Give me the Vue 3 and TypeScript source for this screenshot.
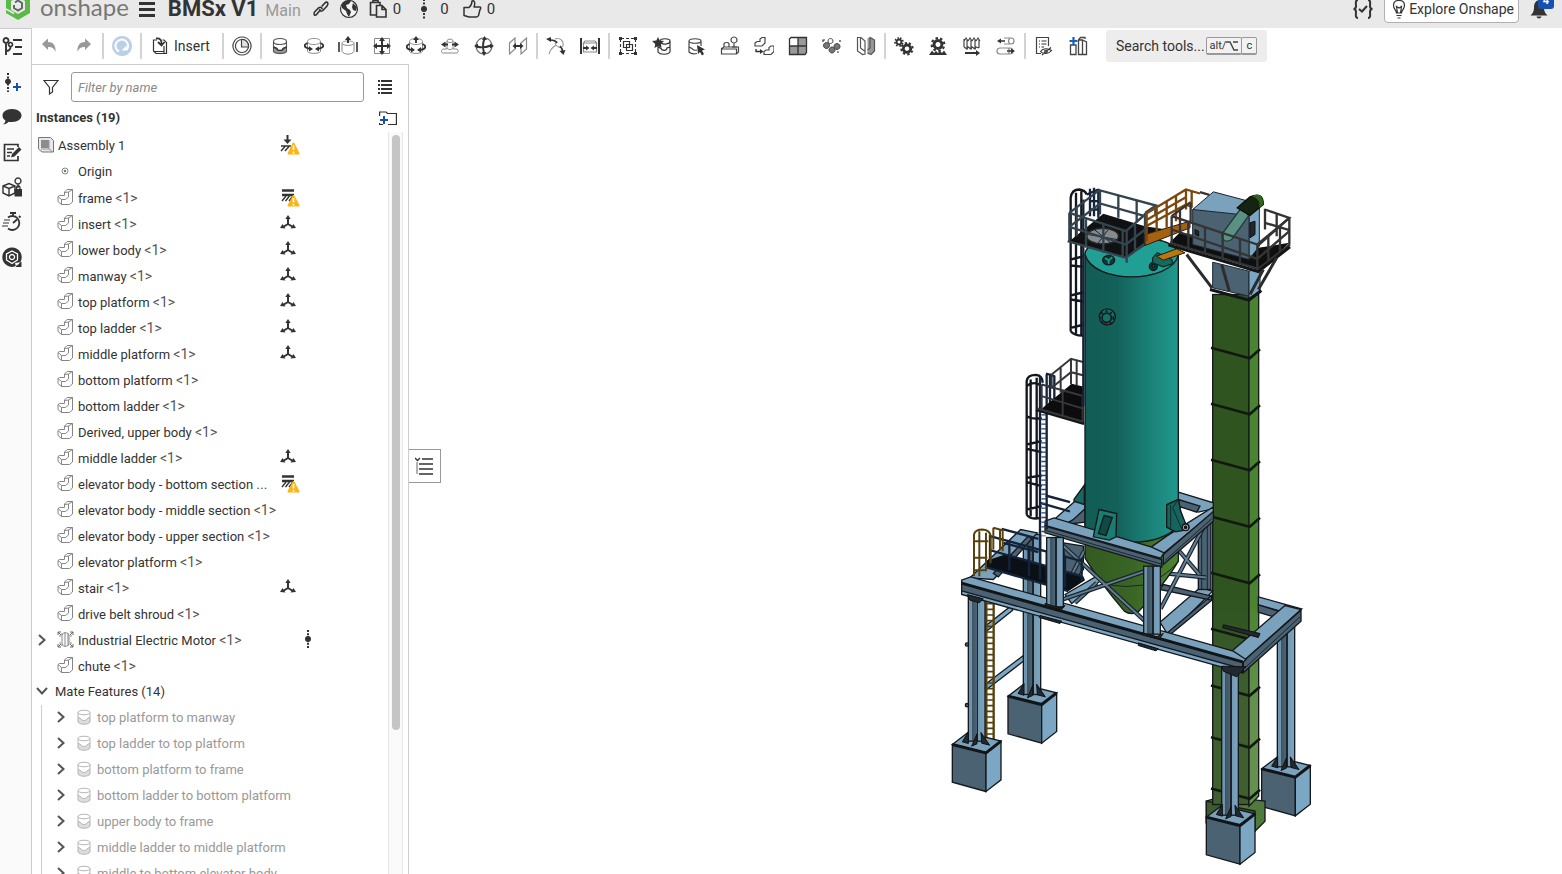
<script setup lang="ts">
interface Part { d: string; f?: string; s?: string; w?: number; t?: string }
interface Tool { name: string; parts: Part[]; sep?: boolean; label?: string }
interface Instance { name: string; n?: string; status?: 'mate' | 'fixed' | 'dots'; kind?: 'motor' }

const K = '#333'
const G = '#8a8a8a'
const cyl = 'M3.5 5.5C3.5 3.7 6 2.5 10 2.5S16.500 3.700 16.500 5.500 14 8.500 10 8.500 3.500 7.300 3.500 5.500ZM3.500 5.500V15.500C5 18 15 18 16.500 15.500V5.500'

const tools: Tool[] = [
  { name: 'Undo', parts: [{ d: 'M2 8L8 2.500V6C13 6 16 9 15.500 16C14 12 12 11 8 11V14Z', f: '#999' }] },
  { name: 'Redo', sep: true, parts: [{ d: 'M17 8L11 2.500V6C6 6 3 9 3.500 16C5 12 7 11 11 11V14Z', f: '#999' }] },
  { name: 'Update', sep: true, parts: [{ d: 'M10 0a10 10 0 1 0 .01 0Z', f: '#bccfe8' }, { d: 'M7 15.500A6.300 6.300 0 1 1 14.500 14', s: '#fff', w: 2 }, { d: 'M14.500 9.500V14.500H9.500Z', f: '#fff' }] },
  { name: 'Insert', label: 'Insert', sep: true, parts: [{ d: 'M7 4H3.500V15L6 17.500H16.500V6.500L14 4H12.500M3.500 15L4.500 15.500H14V17M14 16V10', s: K, w: 1.200 }, { d: 'M6 2.500C10 2 12 4 11.500 8.500M8 6L11.500 9.500 14.500 6', s: K, w: 1.800 }] },
  { name: 'History', sep: true, parts: [{ d: 'M10 1a9 9 0 1 0 .01 0ZM10 3.500a6.500 6.500 0 1 0 .01 0Z', s: '#444', w: 1.200 }, { d: 'M9.500 3.500V11H16.500A6.500 6.500 0 0 0 9.500 3.500Z', f: '#e2e2e2', s: '#444', w: 1.200 }] },
  { name: 'Fastened mate', parts: [{ d: 'M3.500 11L7 12.500C7 15 13 15 13 12.500L16.500 11V16C15 19 5 19 3.500 16Z', f: '#999' }, { d: cyl, s: '#555', w: 1.100 }, { d: 'M3.500 11L7 12.500C7 15 13 15 13 12.500L16.500 11', s: K, w: 1.400 }] },
  { name: 'Revolute mate', parts: [{ d: cyl, s: G, w: 1 }, { d: 'M3.500 7C-1 9 0 12 6 12.700M16.500 7C21 9 20 12 14 12.700', s: K, w: 1.900 }, { d: 'M9 13L5 10.200V15.500ZM11 13L15 10.200V15.500Z', f: K }] },
  { name: 'Slider mate', parts: [{ d: 'M4 7.500C4 6 6 5 10 5S16 6 16 7.500V15.500C14 19 6 19 4 15.500ZM4 7.500C5 10 15 10 16 7.500', s: G, w: 1 }, { d: 'M1 6V16M19 6V16', s: K, w: 1.600 }, { d: 'M10 7V3', s: K, w: 2 }, { d: 'M10 0L13 4H7Z', f: K }] },
  { name: 'Planar mate', parts: [{ d: 'M2.500 2.500H17.500V17.500H2.500Z', s: '#888', w: 1 }, { d: 'M10 4V16M4 10H16', s: K, w: 2 }, { d: 'M10 1L13 5H7ZM10 19L13 15H7ZM1 10L5 7V13ZM19 10L15 7V13Z', f: K }] },
  { name: 'Cylindrical mate', parts: [{ d: cyl, s: G, w: 1 }, { d: 'M3.500 8C-1 10 0 13 6 14M16.500 8C21 10 20 13 14 14M10 7V3', s: K, w: 1.900 }, { d: 'M9 14L5 11V16.500ZM11 14L15 11V16.500ZM10 0L13 4H7Z', f: K }] },
  { name: 'Pin slot mate', parts: [{ d: 'M7 5C7 2.500 13 2.500 13 5V13H17C19 14 18 17 17 17H3C1 17 1 14 3 13H7ZM7 5C8 7 12 7 13 5M7 12C8 14 12 14 13 12', s: G, w: 1 }, { d: 'M4 8.500H8M12 8.500H16', s: K, w: 1.800 }, { d: 'M1 8.500L5.500 5.500V11.500ZM19 8.500L14.500 5.500V11.500Z', f: K }] },
  { name: 'Ball mate', parts: [{ d: 'M10 2a8 8 0 1 0 .01 0Z', s: '#666', w: 1.200 }, { d: 'M3 10.500C7 12 13 11 17 9.500M10.500 3C8 8 9 13 10 17', s: K, w: 1.900 }, { d: 'M10.500 0L13 4H8ZM10 20L12.500 16H7.500ZM0 10L4 7.500V12.500ZM20 10L16 7.500V12.500Z', f: K }] },
  { name: 'Parallel mate', sep: true, parts: [{ d: 'M1.500 7L7 2V13L1.500 18ZM13 7L18.500 2V13L13 18Z', s: G, w: 1.200 }, { d: 'M6 10H14', s: K, w: 2 }, { d: 'M4.500 10L8 7V13ZM15.500 10L12 7V13Z', f: K }] },
  { name: 'Tangent mate', parts: [{ d: 'M9 3C14 1 18 5 17 10C15 13 11 11 9 8M9 8L11 5M10 9C7 11 4 14 3 18', s: '#999', w: 1.100 }, { d: 'M4 4C8 4 10 5 11 7M14 10C16 12 16.500 14 16.500 16', s: K, w: 1.700 }, { d: 'M0 3L5 1 5 6ZM17.500 19L13.500 15 19.500 14Z', f: K }] },
  { name: 'Width mate', sep: true, parts: [{ d: 'M5 5H15L16.500 7V16H3.500V7ZM3.500 7H16.500', s: G, w: 1.200 }, { d: 'M1 2V18M19 2V18', s: K, w: 2 }, { d: 'M3 12H8M12 12H17', s: K, w: 1.800 }, { d: 'M9.500 12L6 9.500V14.500ZM10.500 12L14 9.500V14.500Z', f: K }] },
  { name: 'Group', parts: [{ d: 'M3 2.500H17M3 17.500H17M2.500 3V17M17.500 3V17', s: K, w: 1.100, t: '3 2' }, { d: 'M1 1H4V4H1ZM16 1H19V4H16ZM1 16H4V19H1ZM16 16H19V19H16Z', f: K }, { d: 'M5.500 5.500H11.500V11.500H5.500ZM8.500 8.500H14.500V14.500H8.500Z', s: K, w: 1.200 }] },
  { name: 'Mate connector', parts: [{ d: 'M8 5C8 2 18 2 18 5V16C16 19 8 19 6 16V10M9 7C12 9 18 8 18 5M6 11L9 12.500C10 15 15 15 15 12L18 11', s: K, w: 1.200 }, { d: 'M6 1L7.700 4.500 12 5 9 8 9.500 12 6 10 2.500 12 3.200 8 0 5 4.300 4.500Z', f: K }] },
  { name: 'Select mate', parts: [{ d: 'M3 5C3 2 15 2 15 5V10M3 5C3 8 15 8 15 5M3 5V16C5 18 9 18 11 17.500M3 11L6 12.500C7 14.500 9 14.500 11 14', s: '#444', w: 1.200 }, { d: 'M11 9L19 13.500 16 14.500 18 18 16 19.500 14 16 12 18Z', f: K }] },
  { name: 'Replicate', parts: [{ d: 'M1.500 12.500L4 11H18.500V16L16.500 18H1.500ZM1.500 13H16.500V18M4 11V8C4 6 9 6 9 8V11', s: '#444', w: 1.200 }, { d: 'M14 1a3 3 0 1 0 .01 0ZM14 7V11M12 11H17', s: '#444', w: 1.200 }] },
  { name: 'Linear pattern', parts: [{ d: 'M1 7L3 5.500H6V3L8 1.500H11V7L8 10H1ZM10 15.500L12 14H15V11.500L17 10H20V15.500L17 18.500H10Z', s: '#444', w: 1.200 }, { d: 'M2 13V15.500H6', s: K, w: 1.400 }, { d: 'M9.500 15.500L6 13V18Z', f: K }] },
  { name: 'Pattern', parts: [{ d: 'M10 2H18V10H10ZM2 10H18V18H2Z', f: '#999' }, { d: 'M1.500 3L3 1.500H18.500V16.500L17 18.500H1.500ZM10 2V18M2 10H18', s: K, w: 1.300 }] },
  { name: 'Circular pattern', parts: [{ d: 'M4.500 6.500a3 3 0 1 0 .01 0ZM15 7.500a3 3 0 1 0 .01 0ZM10 11a3 3 0 1 0 .01 0Z', f: '#777', s: '#444', w: 1 }, { d: 'M8.500 2.500a2.500 2.500 0 1 0 .01 0Z', f: '#fff', s: '#444', w: 1 }, { d: 'M3 4H1V6M17 16H15M18 4V6', s: K, w: 1.200 }] },
  { name: 'Mirror', sep: true, parts: [{ d: 'M11.500 2L16 1.500 18.500 4V15L15 18H11.500Z', f: '#999' }, { d: 'M1.500 1.500H5L9 5V18L6.500 18.500 1.500 15ZM4.500 2V12L8.500 15M11.500 17L15 18.500 18.500 15V4L14 1.500V12L11.500 14', s: '#555', w: 1.200 }] },
  { name: 'Gear relation', parts: [{ d: 'M5 3.500a2.500 2.500 0 1 0 .01 0Z', s: K, w: 2 }, { d: 'M5 2a4 4 0 1 0 .01 0Z', s: K, w: 1.600, t: '1.600 1.540' }, { d: 'M13 9a3.700 3.700 0 1 0 .01 0Z', s: K, w: 2.800 }, { d: 'M13 7a5.700 5.700 0 1 0 .01 0Z', s: K, w: 2, t: '2.300 2.180' }] },
  { name: 'Rack and pinion', parts: [{ d: 'M10 4.500a4 4 0 1 0 .01 0Z', s: K, w: 3 }, { d: 'M10 2.200a6.300 6.300 0 1 0 .01 0Z', s: K, w: 2.200, t: '2.500 2.450' }, { d: 'M1 19L4 14.500 6 17 8 15 10 17 12 15 14 17 16 14.500 19 19Z', f: K }] },
  { name: 'Screw relation', parts: [{ d: 'M2 3V11M2 5L4 2 6 5M5 3V12M6 5L8 2 10 5M9 3V12M10 5L12 2 14 5M13 3V12M14 5L16 2 18 5M17 3V12M2 11L5 13 6 11 9 13 10 11 13 13 14 11 17 12', s: '#444', w: 1.200 }, { d: 'M3 17H15', s: K, w: 2 }, { d: 'M18 17L14 14V20Z', f: K }] },
  { name: 'Linear relation', sep: true, parts: [{ d: 'M8 2H15C19 2 19 8 15 8H8M14 2C12 4 12 6 14 8M9 12H4C0 12 0 18 4 18H14C18 18 18 12 14 12ZM12 12C14 14 14 16 12 18', s: G, w: 1.200 }, { d: 'M4 5H9M11 15H17', s: K, w: 1.600 }, { d: 'M1 5L5 2.500V7.500ZM19 15L15 12.500V17.500Z', f: K }] },
  { name: 'Named positions', parts: [{ d: 'M7 17.500H2.500V1.500H14.500V10', s: '#444', w: 1.200 }, { d: 'M5 5H6M7.500 5H12.500M5 8H6M7.500 8H12.500M5 11H6M7.500 11H10', s: K, w: 1.200 }, { d: 'M6.500 15.500C9 12 14 12 17.500 14.500C15 18 9 18.500 6.500 15.500ZM8 19L17 11.500', s: K, w: 1.100 }, { d: 'M12 13.500a2 2 0 1 0 .01 0Z', f: '#555' }] },
  { name: 'Standard content', parts: [{ d: 'M2.500 9H8V18.500H2.500ZM10.500 4H14.500V18.500H10.500ZM10.500 4L12.500 1.500H17V3M14.500 4L18.500 6V18.500H14.500', s: '#444', w: 1.300 }, { d: 'M5.500 1V9M1.500 5H9.500', s: '#1b5fc1', w: 2.200 }] },
]

const rail: Tool[] = [
  { name: 'Features', parts: [{ d: 'M5 1a2.500 2.500 0 1 0 .01 0ZM5 6V18M5 14C8 14 9.500 12 9.500 10', s: K, w: 1.900 }, { d: 'M9.500 5.500a2 2 0 1 0 .01 0Z', f: '#fafafa', s: K, w: 1.600 }, { d: 'M12 3H21M14 10H21M12 17H21', s: K, w: 1.800 }] },
  { name: 'Add mate connector', parts: [{ d: 'M7 1V20', s: K, w: 2, t: '2 1.500' }, { d: 'M7 6.500a3 3 0 1 0 .01 0Z', f: K }, { d: 'M16 11V19M12 15H20', s: '#1651b0', w: 2 }] },
  { name: 'Comments', parts: [{ d: 'M11 2C17 2 20.500 5 20.500 8.500S17 15 11 15C9 15 8 15 7.500 14.700C6 16.500 4 17.500 2 17.500C4 16 4.300 14.500 4.500 13.500C2.500 12.500 1.500 10.500 1.500 8.500C1.500 5 5 2 11 2Z', f: K }] },
  { name: 'Notes', parts: [{ d: 'M17 5V2.500H3.500V18.500H17V14M6 7H13M6 10.500H11M6 14H9', s: K, w: 1.700 }, { d: 'M10 15.500L11 12 18 5 20.500 7.500 13.500 14.500Z', f: K }] },
  { name: 'Configurations', parts: [{ d: 'M2 9L8 6.500 14 9V16L8 19 2 16ZM2 9L8 11.500 14 9M8 11.500V19', s: K, w: 1.400 }, { d: 'M17 1a3 3 0 1 0 .01 0ZM17 7V11', s: K, w: 1.400 }, { d: 'M13.500 12H21V19.500H13.500Z', f: K }, { d: 'M15.500 12V10.500C15.500 8.500 19 8.500 19 10.500V12', s: K, w: 1.300 }] },
  { name: 'Performance', parts: [{ d: 'M7 5.500A7 7 0 1 1 7 16.500M12 1V4M9 1H15M18 4L19.500 5.500M12 11L16 7.500', s: K, w: 1.800 }, { d: 'M3 8H9M2 11H8M1 14H7', s: K, w: 1.200 }] },
  { name: 'Search', parts: [{ d: 'M11 .5a9.700 9.700 0 1 0 .01 0ZM14 16L20.500 15V20H15Z', f: K }, { d: 'M11 4L16.500 7V13L11 16.500 5.500 13V7Z', s: '#fff', w: 1.300 }, { d: 'M11 7.500a2.500 2.500 0 1 0 .01 0Z', s: '#fff', w: 1.300 }] },
]

const instances: Instance[] = [
  { name: 'frame', n: '<1>', status: 'fixed' },
  { name: 'insert', n: '<1>', status: 'mate' },
  { name: 'lower body', n: '<1>', status: 'mate' },
  { name: 'manway', n: '<1>', status: 'mate' },
  { name: 'top platform', n: '<1>', status: 'mate' },
  { name: 'top ladder', n: '<1>', status: 'mate' },
  { name: 'middle platform', n: '<1>', status: 'mate' },
  { name: 'bottom platform', n: '<1>' },
  { name: 'bottom ladder', n: '<1>' },
  { name: 'Derived, upper body', n: '<1>' },
  { name: 'middle ladder', n: '<1>', status: 'mate' },
  { name: 'elevator body - bottom section', n: '...', status: 'fixed' },
  { name: 'elevator body - middle section', n: '<1>' },
  { name: 'elevator body - upper section', n: '<1>' },
  { name: 'elevator platform', n: '<1>' },
  { name: 'stair', n: '<1>', status: 'mate' },
  { name: 'drive belt shroud', n: '<1>' },
  { name: 'Industrial Electric Motor', n: '<1>', status: 'dots', kind: 'motor' },
  { name: 'chute', n: '<1>' },
]

const mates: string[] = [
  'top platform to manway', 'top ladder to top platform', 'bottom platform to frame',
  'bottom ladder to bottom platform', 'upper body to frame',
  'middle ladder to middle platform', 'middle to bottom elevator body',
]

const bands: number[] = [850, 1018, 1186, 1356, 1525, 1693, 1863, 2018, 2172]
const footings: [number, number][] = [[1797, 1895], [1630, 2040], [2558, 2113]]
const rearBraces = 'M632 388L762 140M688 215L748 285M632 280L768 294M345 325L402 215M375 370L440 310'
const frontBraces = 'M332 192L585 425M332 362L585 275'
</script>

<template>
  <div class="app">
    <header class="header">
      <svg class="logo" width="28" height="30" viewBox="0 0 28 30" aria-hidden="true">
        <path d="M14 1L26 8V22L14 29 2 22V8Z" fill="#5cb947" />
        <path d="M14 6L21 10V19L14 23 7 19V10Z" fill="#e9e9e9" />
        <path d="M11 11.500L14 9.500 18 12V17L14 19.500 10 17V14" fill="none" stroke="#5f6b66" stroke-width="2" />
        <path d="M2 18L10 22.500M26 8L18 4" stroke="#e9e9e9" stroke-width="1.500" />
      </svg>
      <span class="brand">onshape</span>
      <button class="plain menu" aria-label="Menu"><i></i><i></i><i></i></button>
      <h1 class="title">BMSx V1</h1>
      <span class="branch">Main</span>
      <button class="plain link" aria-label="Share link">
        <svg width="18" height="18" viewBox="0 0 18 18"><path d="M7.500 10.500L4 14C2 16 .5 13 2.500 11L7 7.500C9 6.500 10.500 8 10 9.500M10 6.500L13.500 3.500C16 1.500 17.500 4 15.500 6.500L11 10.500C9 12 7.500 11 7.800 8.800" fill="none" stroke="#333" stroke-width="1.600" transform="rotate(-6 9 9)" /></svg>
      </button>
      <button class="plain globe" aria-label="Public">
        <svg width="20" height="20" viewBox="0 0 20 20"><circle cx="10" cy="10" r="8.500" fill="#f4f4f4" stroke="#333" stroke-width="1.200" /><path d="M3 5C6 1 10 1 12 2L10 5 7 6 8 9 11 11 12 13 10 18 8 15 7 12 3 9ZM14 4L18 8 17 12 14 11 13 8Z" fill="#333" /></svg>
      </button>
      <button class="plain count">
        <svg width="20" height="20" viewBox="0 0 20 20"><path d="M12 6V3.500H2.500V16H8M5 3.500V1.500H10V3.500M8.500 6.500H14L18 10.500V18H8.500ZM14 6.500V10.500H18" fill="none" stroke="#333" stroke-width="1.600" /></svg>
        <span>0</span>
      </button>
      <button class="plain count second">
        <svg width="12" height="20" viewBox="0 0 12 20"><path d="M6 0V20" stroke="#333" stroke-width="2" stroke-dasharray="2 1.500" /><circle cx="6" cy="10" r="3" fill="#333" /></svg>
        <span>0</span>
      </button>
      <button class="plain count third">
        <svg width="20" height="20" viewBox="0 0 20 20"><path d="M2 8.500H7C9 7 10 5 10 2C12.500 1 13.500 4 12 8H18C19 8 19 9.500 18 10.500L16.500 16.500C16 17.500 15 18 14 18H7L2 16.500Z" fill="none" stroke="#333" stroke-width="1.500" stroke-linejoin="round" /></svg>
        <span>0</span>
      </button>
      <span class="grow"></span>
      <button class="plain code" aria-label="Custom features">
        <svg width="22" height="20" viewBox="0 0 22 20"><path d="M6 1C3 1 4 5 4 7C4 9 3 10 1.500 10C3 10 4 11 4 13C4 15 3 19 6 19M16 1C19 1 18 5 18 7C18 9 19 10 20.500 10C19 10 18 11 18 13C18 15 19 19 16 19" fill="none" stroke="#333" stroke-width="2" /><path d="M7 10L10 12.500 15 7" fill="none" stroke="#333" stroke-width="2" /></svg>
      </button>
      <button class="explore">
        <svg width="14" height="20" viewBox="0 0 14 20"><path d="M4.500 14C4.500 11 1.500 10 1.500 6.500C1.500 3 4 1.500 7 1.500S12.500 3 12.500 6.500C12.500 10 9.500 11 9.500 14ZM4.500 16.500H9.500M5.500 19H8.500M5.500 14L4.500 7.500 7 9 9.500 7.500 8.500 14" fill="none" stroke="#333" stroke-width="1.200" /></svg>
        Explore Onshape
      </button>
      <button class="plain bell" aria-label="Notifications">
        <svg width="18" height="20" viewBox="0 0 18 20"><path d="M9 1C13 2 14 5 14 9C14 12 15 14 17.500 16.500H.5C3 14 4 12 4 9C4 5 5 2 9 1ZM6.500 17.500H11.500C11 20 7 20 6.500 17.500Z" fill="#333" /></svg>
        <span class="badge">4</span>
      </button>
    </header>

    <div class="body">
      <nav class="rail" aria-label="Panels">
        <button v-for="r in rail" :key="r.name" class="plain rail-btn" :aria-label="r.name">
          <svg width="22" height="20" viewBox="0 0 22 20">
            <path v-for="(p, i) in r.parts" :key="i" :d="p.d" :fill="p.f ?? 'none'" :stroke="p.s ?? 'none'" :stroke-width="p.w" :stroke-dasharray="p.t" />
          </svg>
        </button>
      </nav>

      <div class="work">
        <div class="toolbar" role="toolbar">
          <template v-for="t in tools" :key="t.name">
            <button class="plain tool" :class="{ wide: t.label }" :aria-label="t.name">
              <svg width="20" height="20" viewBox="0 0 20 20">
                <path v-for="(p, i) in t.parts" :key="i" :d="p.d" :fill="p.f ?? 'none'" :stroke="p.s ?? 'none'" :stroke-width="p.w" :stroke-dasharray="p.t" />
              </svg>
              <span v-if="t.label">{{ t.label }}</span>
            </button>
            <span v-if="t.sep" class="sep"></span>
          </template>
          <button class="search">
            <span>Search tools...</span>
            <span class="keys"><kbd>alt/<svg width="12" height="10" viewBox="0 0 12 10"><path d="M0 1H4L8 9H12M7 1H12" fill="none" stroke="#444" stroke-width="1.400" /></svg></kbd><kbd>c</kbd></span>
          </button>
        </div>

        <div class="main">
          <aside class="panel">
            <div class="filter">
              <button class="plain funnel" aria-label="Filter">
                <svg width="16" height="16" viewBox="0 0 16 16"><path d="M1 1.500H15L9.500 8.500V13L6.500 15V8.500Z" fill="none" stroke="#333" stroke-width="1.200" /></svg>
              </button>
              <input type="text" placeholder="Filter by name" aria-label="Filter by name" />
              <button class="plain" aria-label="List options">
                <svg width="14" height="14" viewBox="0 0 14 14"><path d="M0 1H2M0 5H2M0 9H2M0 13H2M3 1H14M3 5H14M3 9H14M3 13H14" stroke="#333" stroke-width="2" /></svg>
              </button>
            </div>
            <div class="section">
              <h2>Instances (19)</h2>
              <button class="plain" aria-label="New folder">
                <svg width="18" height="15" viewBox="0 0 18 15"><path d="M.6 5V1H7L8.500 2.500H17.400V13.500H9M.6 12V13.500H4" fill="none" stroke="#333" stroke-width="1.200" /><path d="M5 5V13M1 9H9" stroke="#1651b0" stroke-width="2" /></svg>
              </button>
            </div>
            <div class="scroll">
              <ul class="tree">
                <li class="row root">
                  <svg width="16" height="16" viewBox="0 0 16 16"><path d="M.5.5H12.500L15.500 3.500V15H4L.5 12Z" fill="#e8e8e8" stroke="#777" /><path d="M3 3H11V11H3Z" fill="#8c8c8c" /><path d="M11 3V12L15 15M11 12H3" fill="none" stroke="#999" /></svg>
                  <span class="name">Assembly 1</span>
                  <span class="tail">
                    <svg width="20" height="20" viewBox="0 0 20 20"><path d="M7.500 0V6" stroke="#333" stroke-width="2" /><path d="M3.500 4.500H11.500L7.500 9Z" fill="#333" /><path d="M1 11H11M1 16L5 11.500M5 16L9 11.500" stroke="#333" stroke-width="1.400" /><path d="M13.500 8.500L18.500 18.500H8.500Z" fill="#fdb515" stroke="#fdb515" stroke-width="2" stroke-linejoin="round" /><path d="M13.500 10.500V15M13.500 16.500V18.500" stroke="#fff" stroke-width="1.600" /></svg>
                  </span>
                </li>
                <li class="row origin">
                  <svg width="8" height="8" viewBox="0 0 8 8"><circle cx="4" cy="4" r="3" fill="none" stroke="#888" /><circle cx="4" cy="4" r="1.200" fill="#777" /></svg>
                  <span class="name">Origin</span>
                </li>
                <li v-for="it in instances" :key="it.name" class="row">
                  <span class="caret"><svg v-if="it.kind" width="8" height="12" viewBox="0 0 8 12"><path d="M1 1L6.500 6 1 11" fill="none" stroke="#555" stroke-width="2" /></svg></span>
                  <svg v-if="it.kind" width="17" height="17" viewBox="0 0 17 17"><path d="M5 2V15M8 1V16M11 2V15M5 4C6 1 11 1 12 4V13C11 16 6 16 5 13M2 5H4M2 12H4M13 5H15M13 12H15" fill="none" stroke="#888" /><path d="M1 4V1H4M13 1H16V4M16 13V16H13M4 16H1V13M1 1L4 4M16 1L13 4M1 16L4 13M16 16L13 13" fill="none" stroke="#666" /></svg>
                  <svg v-else width="17" height="17" viewBox="0 0 17 17"><path d="M1 7.500L2.500 6.500H7.500V3L10 .5H15.500V13L12.500 15.500H4.500L1 12.500ZM1 7.500L4.500 10.500V15.500M4.500 10.500H8.500L11.500 8V3M11.500 3L7.500 3.500M11.500 3L15.500 .5" fill="none" stroke="#858585" stroke-linejoin="round" /></svg>
                  <span class="name">{{ it.name }} <span class="num">{{ it.n }}</span></span>
                  <span v-if="it.status" class="tail" :class="it.status">
                    <svg v-if="it.status === 'mate'" width="16" height="16" viewBox="0 0 16 16"><path d="M8 3V9L3 12M8 9L13 12" fill="none" stroke="#333" stroke-width="2" /><path d="M8 0L10.700 4H5.300ZM0 13L2.500 9 5.500 13.500ZM16 13L13.500 9 10.500 13.500Z" fill="#333" /></svg>
                    <svg v-else-if="it.status === 'fixed'" width="20" height="20" viewBox="0 0 20 20"><path d="M2 3.500H14M2 8H14" stroke="#333" stroke-width="2.500" /><path d="M2 14L6 9M5.500 14L9.500 9M9 14L13 9" stroke="#333" stroke-width="1.400" /><path d="M13.500 9L18.500 18.500H8.500Z" fill="#fdb515" stroke="#fdb515" stroke-width="2" stroke-linejoin="round" /><path d="M13.500 11V15.500M13.500 17V18.500" stroke="#fff" stroke-width="1.600" /></svg>
                    <svg v-else width="8" height="18" viewBox="0 0 8 18"><path d="M4 0V18" stroke="#333" stroke-width="2" stroke-dasharray="2 1.200" /><circle cx="4" cy="9" r="3" fill="#333" /></svg>
                  </span>
                </li>
                <li class="row group">
                  <svg width="12" height="8" viewBox="0 0 12 8"><path d="M1 1L6 6.500 11 1" fill="none" stroke="#555" stroke-width="2" /></svg>
                  <span class="name">Mate Features (14)</span>
                </li>
              </ul>
              <ul class="tree mates">
                <li v-for="m in mates" :key="m" class="row">
                  <svg width="8" height="12" viewBox="0 0 8 12"><path d="M1 1L6.500 6 1 11" fill="none" stroke="#555" stroke-width="2" /></svg>
                  <svg width="14" height="16" viewBox="0 0 14 16"><path d="M1 8L4 10C5 12 9 12 10 10L13 8V13C11 16 3 16 1 13Z" fill="#ddd" /><path d="M1 3.500C1 .5 13 .5 13 3.500S1 6.500 1 3.500V13C3 16 11 16 13 13V3.500M1 8L4 10C5 12 9 12 10 10L13 8" fill="none" stroke="#b5b5b5" /></svg>
                  <span class="name">{{ m }}</span>
                </li>
              </ul>
              <div class="track"><div class="thumb"></div></div>
            </div>
          </aside>

          <section class="canvas" aria-label="Model view">
            <button class="toggle" aria-label="Toggle list">
              <svg width="18" height="18" viewBox="0 0 18 18"><path d="M0 1L2.500 3.500 5 1M7 2H18M4 7H18M4 12H18M4 17H18" fill="none" stroke="#333" stroke-width="1.300" /><path d="M2 5V17" stroke="#999" stroke-width="1.500" /></svg>
            </button>
            <svg class="model" viewBox="0 0 3459 2427" preserveAspectRatio="xMidYMid meet" role="img" aria-label="Silo and bucket elevator assembly">
              <defs>
                <linearGradient id="teal" x1="0" x2="1" y1="0" y2="0"><stop offset="0" stop-color="#125c55" /><stop offset=".35" stop-color="#13615a" /><stop offset=".7" stop-color="#1b8278" /><stop offset="1" stop-color="#20988c" /></linearGradient>
                <linearGradient id="cone" x1="0" x2="1" y1="0" y2="0"><stop offset="0" stop-color="#345a22" /><stop offset=".5" stop-color="#3a6525" /><stop offset="1" stop-color="#4c8530" /></linearGradient>
                <linearGradient id="tf" x1="0" x2="0" y1="0" y2="1"><stop offset=".6" stop-color="#2f5420" /><stop offset=".8" stop-color="#3f5f2f" /></linearGradient>
                <linearGradient id="ts" x1="0" x2="0" y1="0" y2="1"><stop offset=".6" stop-color="#4a8430" /><stop offset=".8" stop-color="#64924e" /></linearGradient>
                <linearGradient id="col" x1="0" x2="1" y1="0" y2="0"><stop offset="0" stop-color="#6f94ad" /><stop offset=".2" stop-color="#6f94ad" /><stop offset=".2" stop-color="#3f5361" /><stop offset=".52" stop-color="#4d6575" /><stop offset=".52" stop-color="#1b242b" /><stop offset=".6" stop-color="#1b242b" /><stop offset=".6" stop-color="#7399b3" /><stop offset="1" stop-color="#7ca5c1" /></linearGradient>
                <g id="foot">
                  <path class="top" d="M0 0L46-35 146-10 101 25Z" /><path class="side" d="M0 0L101 25V141L0 113Z" /><path class="lit" d="M101 25L146-10V106L101 141Z" /><path class="heavy" d="M0 0L101 25 146-10" />
                </g>
                <g id="gusset"><path class="plate" d="M30-8L48-38V-3ZM58 5L74-32V-2ZM86-36L112 2 88-4Z" /></g>
              </defs>

              <!-- rear supports -->
              <g class="ink">
                <use href="#foot" :x="footings[0][0]" :y="footings[0][1]" />
                <rect fill="url(#col)" x="1843" y="1410" width="52" height="480" />
                <use href="#gusset" :x="footings[0][0]" :y="footings[0][1]" />
                <use href="#foot" :x="footings[2][0]" :y="footings[2][1]" />
                <rect fill="url(#col)" x="2605" y="1670" width="52" height="437" />
                <use href="#gusset" :x="footings[2][0]" :y="footings[2][1]" />
              </g>

              <!-- elevator tower -->
              <g class="ink">
                <path fill="#4f7a3b" d="M2392 2210L2440 2195 2568 2210V2270L2538 2300 2392 2275Z" />
                <path fill="#3d5c2d" d="M2392 2210L2538 2240V2300L2392 2275Z" />
                <rect fill="url(#tf)" x="2411" y="690" width="109" height="1530" />
                <path fill="url(#ts)" d="M2520 690H2549V2195L2520 2225Z" />
                <path v-for="y in bands" :key="y" class="heavy band" :d="`M2406 ${y}L2522 ${y + 31} 2553 ${y + 4}`" />
              </g>

              <!-- lower frame and rear bracing -->
              <g class="ink" transform="translate(1623 1245)">
                <path class="top" d="M60 295L212 150 262 160 130 300Z" /><path class="side" d="M130 282L235 170 245 178 145 292Z" />
                <path class="top" d="M925 352L1053 388 1010 400 925 376Z" /><path class="side" d="M925 376L995 398 970 412 925 398Z" />
                <path class="top" d="M840 520L1005 378 1053 390 880 545Z" /><path class="side" d="M880 545L1053 392V425L880 580Z" />
                <path class="line" d="M884 566L1050 412" />
                <path class="plate" d="M820 436L930 462 925 474 818 445Z" />
                <path class="top" d="M630 428L750 325 788 335 655 468Z" /><path class="side" d="M640 470L788 345V360L650 474ZM640 315L785 350V362L630 330Z" />
                <path class="lit" d="M105 440L185 378 188 392 108 456ZM105 615L220 528V545L110 630Z" />
                <rect class="side" x="745" y="120" width="38" height="210" /><path class="line" d="M755 120V330M772 120V330" />
                <path class="top" d="M685 38L790 70V88L745 98 685 70Z" /><path class="side" d="M685 60L750 80 740 98 685 80Z" />
                <path class="top" d="M345 345L440 290 450 305 365 372Z" />
                <path class="side" d="M340 190L400 200V270L350 330Z" />
                <path class="lit" d="M375 65L405 72V100L345 135 310 122Z" /><path class="side" d="M405 88L370 120 345 135 405 128Z" />
                <path class="brace" :d="rearBraces" /><path class="brace core" :d="rearBraces" />
              </g>

              <!-- silo -->
              <g class="ink">
                <path fill="url(#cone)" d="M2028 1370H2308V1490Q2270 1555 2190 1640Q2168 1655 2146 1640Q2070 1550 2028 1480Z" />
                <path class="line" d="M2105 1562Q2150 1570 2200 1562M2028 1480Q2060 1540 2105 1562M2308 1490Q2270 1540 2200 1562" />
                <path fill="url(#teal)" d="M2028 570H2308V1385Q2260 1433 2168 1433Q2050 1430 2028 1385Z" />
                <path fill="#20a094" d="M2028 570C2028 500 2308 500 2308 570C2300 615 2230 637 2168 637S2040 615 2028 570Z" />
                <path fill="#17695f" d="M1995 1305L2026 1262V1320L1995 1310Z" />
                <path fill="#14665d" d="M2273 1320L2308 1305 2315 1340 2333 1395 2300 1402 2273 1388Z" /><path class="line" d="M2285 1322V1390M2308 1305L2290 1330 2318 1395" />
                <circle cx="2095" cy="757" r="24" fill="#167068" /><circle cx="2093" cy="760" r="14" fill="none" stroke-width="5" /><circle cx="2093" cy="760" r="20" fill="none" stroke-width="5" stroke-dasharray="6 9" />
                <ellipse cx="2099" cy="587" rx="18" ry="14" fill="#0d3b37" /><path d="M2088 580L2099 588 2110 578M2099 588V598" fill="none" stroke="#20a094" stroke-width="5" />
                <circle cx="2233" cy="606" r="12" fill="#0d3b37" /><circle cx="2233" cy="604" r="4" fill="#20a094" />
              </g>

              <!-- upper support frame -->
              <g class="ink" transform="translate(1623 1245)">
                <path class="top" d="M600 205L650 170 790 82V98L640 222Z" /><path class="side" d="M640 225L790 96V125L640 255Z" /><path class="line" d="M645 243L785 118" />
                <path class="top" d="M285 125L312 115 605 203 642 220 632 236 285 138Z" /><path class="side" d="M285 140L635 240V263L285 160Z" /><path class="line" d="M288 153L635 254" />
                <path class="brace" :d="frontBraces" /><path class="brace core" :d="frontBraces" />
                <path fill="#14665d" d="M650 76L685 60 692 95 714 150 677 157 650 143Z" /><path class="line" d="M662 78V145M685 60L668 85 696 150" />
                <circle cx="707" cy="143" r="10" fill="#fff" stroke-width="5" /><circle cx="707" cy="143" r="4" fill="#111" />
                <path fill="#1a7d72" d="M447 90L500 102 498 172 478 182 430 172Z" /><path fill="#0f4a44" d="M462 108L487 114 468 168 445 162Z" />
              </g>

              <!-- bottom platform, cage and ladder -->
              <g transform="translate(1623 1245)">
                <path fill="#0b1016" d="M105 245L165 225 400 290 405 302 355 335 105 262Z" />
                <path class="navy" d="M120 170L395 245M120 212L395 290M105 262L355 335M120 165V255M178 182V272M237 200V290M290 215V305M345 235V325M395 235V305M155 148L265 178M160 190L265 218" />
                <path class="gold" d="M72 290V165Q75 150 98 150Q120 152 122 170V250M88 290V155M108 160V275M72 185H115M72 235H112M72 272H110M130 145L158 152V215M130 145V210M150 150V212" />
              </g>
              <g class="gold" transform="translate(1623 1245)">
                <path d="M109 365V780M131 372V780" stroke-width="7" /><path d="M120 370V780" stroke-width="20" stroke-dasharray="5 12" />
              </g>

              <!-- lower front beam and front supports -->
              <g class="ink">
                <use href="#foot" :x="footings[1][0]" :y="footings[1][1]" />
                <rect fill="url(#col)" x="1678" y="1590" width="50" height="440" />
                <use href="#gusset" :x="footings[1][0]" :y="footings[1][1]" />
                <use href="#foot" x="2392" y="2258" />
                <rect fill="url(#col)" x="2438" y="1800" width="50" height="452" />
                <use href="#gusset" x="2392" y="2258" />
                <circle cx="1674" cy="1740" r="5" fill="#4d6575" /><circle cx="1674" cy="1922" r="5" fill="#4d6575" />
              </g>
              <g class="ink" transform="translate(1623 1245)">
                <path class="top" d="M35 302L62 292 850 515 888 540 878 550 35 312Z" /><path class="side" d="M35 312L878 548V578L35 342Z" /><path class="lit" d="M35 334L878 568V580L35 345Z" />
                <path class="heavy" d="M35 311L878 547" />
                <path class="plate" d="M270 408L335 425 330 432 268 414ZM565 490L625 508 618 514 565 498ZM52 345L100 358 88 370 60 362ZM815 560L888 562 860 592 820 575Z" />
                <rect fill="url(#col)" x="290" y="174" width="50" height="208" /><rect fill="url(#col)" x="581" y="260" width="50" height="204" />
                <path class="plate" d="M285 372L330 385 345 378 335 390 285 378ZM578 460L620 472 640 462 628 478 578 466Z" />
              </g>

              <!-- middle cage, ladder and platform -->
              <g transform="translate(1803 855)">
                <path class="navy" d="M107 438L180 458M90 460L180 486" stroke-width="12" />
                <path class="cage" d="M50 495V95Q52 76 78 76Q98 78 98 100M62 90V500M80 85V505M50 495Q60 512 92 505M50 110Q70 92 96 110M50 200Q70 212 95 205M50 285L95 275M50 298L95 308M50 385L95 378M50 398L95 410M50 480L95 470" />
                <path class="navy" d="M90 80V690M110 75V540M120 72V170M133 78V150M108 72L133 80M110 110L133 115" /><path class="rungs" d="M101 180V560" />
                <path fill="#0c0c0e" d="M95 178L185 103 222 112V225L95 185Z" />
                <path class="rail-line" d="M95 105L222 140M95 140L222 178M125 75L183 28 222 38M125 115L183 68 222 78M152 50V130M183 28V105M200 33V108M95 105V180M158 125V200M218 138V222M125 75V110" />
                <path class="heavy" d="M78 180L222 222" /><path class="rail-line" d="M80 176L220 217" />
              </g>

              <!-- top cage and platforms -->
              <g transform="translate(1833 345)">
                <path class="cage" d="M152 455V55Q155 30 178 30Q195 32 200 45M168 40V462M184 35V468M152 455Q165 470 192 468M152 240L192 230M152 258L192 262M152 348L192 338M152 360L192 366M152 445L192 435" />
                <path class="navy" d="M190 60V680M210 28V110M222 25V110M235 28V115M200 45L235 30M210 65H238M210 90H238" />
                <path fill="#101113" d="M148 185L250 103 375 140 440 150 375 198 318 235Z" />
                <ellipse cx="248" cy="170" rx="48" ry="24" fill="#858b8e" stroke="#222" stroke-width="5" /><path class="line" d="M205 165L290 180M225 152L275 192M235 190L265 150" />
                <path class="rail-blue" d="M148 100L238 32 408 78 376 100M148 142L240 72 375 110M148 100V188M170 85V170M198 120V205M250 135V220M308 152V235M320 150V250M345 130V210M375 100V190M240 32V105M295 48V115M350 62V130M406 78V105M148 100L318 155 375 105M148 142L318 195 375 150M143 185L318 235 375 192" />
                <path fill="#a6610f" stroke="#2a1a05" stroke-width="3" d="M375 165L510 125V145L375 198Z" />
                <path fill="#17695f" stroke="#0b2e2a" stroke-width="4" d="M398 235L412 220 455 240 460 252 430 262 398 250Z" />
                <path fill="#b8780f" stroke="#2a1a05" stroke-width="3" d="M410 230L470 208 495 220 430 242Z" />
                <path class="orange" d="M378 103L498 30 540 42M378 140L498 75 515 82M380 103V185M410 85V158M440 65V145M468 48V125M498 30V90M515 35V85M378 122L500 52" />
                <path fill="#0e0f10" d="M450 188L480 158 715 205 808 190 722 272Z" />
                <path class="lit edge" d="M687 105L718 85V200L687 240Z" />
                <path class="side edge" d="M518 90L580 60 687 110V240L518 195Z" /><path class="top edge" d="M518 90L580 37 712 72 660 105Z" />
                <path class="rail-gray" d="M735 90L808 115 712 200M735 130L808 152M735 88V150M770 100V170M808 112V195" />
                <path fill="#5b9183" stroke="#213b35" stroke-width="4" d="M605 165L660 90Q680 85 685 110L635 180Q610 195 605 165Z" />
                <path fill="#142410" stroke="#0a0f08" stroke-width="4" d="M652 85L690 52Q730 35 730 75L690 108Z" /><path fill="#2e661c" d="M697 50Q730 35 730 75L718 85Q722 58 697 50Z" />
                <path class="plate" d="M690 130L705 125V165L690 175ZM525 150L536 155V170L525 165Z" />
                <path class="side edge" d="M578 248L687 275V350L578 325Z" /><path class="lit edge" d="M687 275L720 262V335L687 355Z" />
                <path class="rail-gray" d="M455 110L712 195 808 115M455 150L712 238 808 155M455 110L512 68M450 190L715 268 810 195M455 110V190M505 125V205M555 142V220M608 160V240M660 178V255M712 195V268M745 170V245M780 140V220M480 90V160M512 70V130M540 38L568 46" />
                <path class="heavy" d="M445 196L715 276 810 202" />
                <path class="strut" d="M500 225L576 325M605 255L628 335M770 235L715 330M730 270L690 345" />
                <path class="heavy" stroke-width="12" d="M570 330L687 362 724 333" />
              </g>
            </svg>
          </section>
        </div>
      </div>
    </div>
  </div>
</template>

<style>
html, body { margin: 0; overflow: hidden; }
</style>

<style scoped>
.app { display: flex; flex-direction: column; height: 100vh; overflow: hidden; background: #fff; color: #333; font: 13px/20px Roboto, "Noto Sans", sans-serif; }
.app *, .app *::before { box-sizing: border-box; }
.plain { display: flex; align-items: center; justify-content: center; border: 0; padding: 0; background: none; color: inherit; font: inherit; flex: none; }
svg { display: block; flex: none; }
ul { list-style: none; margin: 0; padding: 0; }

.header { display: flex; align-items: center; height: 28px; flex: none; padding: 0 14px 10px 4px; background: #e9e9e9; }
.logo { margin-bottom: 6px; }
.brand { margin: 0 10px 4px 8px; font: 24px/14px Lato, sans-serif; color: #777; }
.menu { flex-direction: column; gap: 3px; width: 16px; }
.menu i { width: 16px; height: 3px; background: #333; }
.title { margin: 0 7px 0 13px; font-size: 22px; line-height: 18px; font-weight: 700; }
.branch { margin: 4px 11px 0 0; font-size: 16px; color: #999; }
.globe { margin: 0 9px; }
.count { gap: 5px; font-size: 15px; line-height: 18px; }
.second { margin-left: 17px; gap: 10px; }
.third { margin-left: 13px; }
.grow { flex: 1; }
.code { margin-right: 10px; }
.explore { display: flex; align-items: center; gap: 3px; height: 28px; flex: none; padding: 0 4px 0 7px; border: 1px solid #b0b0b0; border-radius: 4px; background: #fff; color: #333; font: 14px/18px Roboto, sans-serif; }
.bell { position: relative; margin-left: 11px; }
.badge { position: absolute; left: 8px; bottom: 10px; width: 16px; height: 16px; border-radius: 3px; background: #1651b0; color: #fff; font-size: 11px; line-height: 16px; font-weight: 700; }

.body { display: flex; flex: 1; min-height: 0; }
.rail { width: 32px; flex: none; border-top: 1px solid #ccc; border-right: 1px solid #ccc; background: #fafafa; }
.rail-btn { width: 24px; height: 35px; }
.work { display: flex; flex-direction: column; flex: 1; min-width: 0; }
.toolbar { display: flex; align-items: center; height: 36px; flex: none; padding-left: 1px; }
.tool { width: 34px; height: 34px; }
.wide { justify-content: flex-start; width: 78px; padding-left: 7px; gap: 4px; font-size: 14px; }
.sep { width: 2px; height: 26px; margin: 0 1px; background: #d3d3d3; flex: none; }
.search { display: flex; align-items: center; gap: 1px; height: 32px; margin-left: 11px; padding: 0 10px; border: 0; border-radius: 3px; background: #ededed; color: #333; font: 14px/20px Roboto, sans-serif; white-space: nowrap; }
.keys { display: flex; }
kbd { display: flex; align-items: center; height: 18px; padding: 0 3px; border: 1px solid #999; border-bottom-width: 2px; border-radius: 2px; background: #f2f2f2; font: 11px/14px Roboto, sans-serif; }
kbd + kbd { padding: 0 4px; margin-left: -1px; }

.main { display: flex; flex: 1; min-height: 0; }
.panel { display: flex; flex-direction: column; width: 377px; flex: none; border-top: 1px solid #ccc; border-right: 1px solid #ccc; }
.filter { display: flex; align-items: center; padding: 7px 16px 0 11px; }
.filter input { flex: 1; min-width: 0; height: 30px; margin: 0 14px 0 12px; padding: 0 6px; border: 1px solid #999; border-radius: 3px; font: 13px/20px Roboto, sans-serif; outline: 0; }
.filter input::placeholder { color: #8a8a8a; font-style: italic; opacity: 1; }
.section { display: flex; align-items: center; justify-content: space-between; height: 30px; padding: 2px 11px 0 4px; }
.section h2 { margin: 0; font-size: 13px; line-height: 20px; font-weight: 700; }
.scroll { position: relative; flex: 1; min-height: 0; padding-top: 1px; overflow: hidden; }
.row { display: flex; align-items: center; height: 26px; padding-right: 21px; white-space: nowrap; }
.row .name { flex: 1; min-width: 0; margin-left: 4px; }
.row .num { color: #555; font-size: 14px; }
.row > svg, .tail { margin-bottom: 2px; }
.caret { display: flex; width: 19px; margin: 0 0 0 6px; }
.root { padding-left: 6px; }
.origin { padding-left: 29px; }
.origin .name { margin-left: 9px; }
.tail { width: 107px; flex: none; }
.dots { padding-left: 24px; }
.group { padding-left: 4px; }
.row.group .name { margin-left: 7px; }
.mates { margin-left: 9px; border-left: 1px solid #ccc; color: #999; }
.mates .row { padding-left: 15px; }
.mates .row svg + svg { margin-left: 12px; }
.mates .row .name { margin-left: 6px; }
.track { position: absolute; top: 0; right: 5px; bottom: 0; width: 15px; padding: 3px 3px 0; border: 1px solid #e6e6e6; border-width: 0 1px; background: #fafafa; }
.thumb { width: 8px; height: calc(80% + 4px); border-radius: 4px; background: #c5c5c5; }

.canvas { position: relative; flex: 1; min-width: 0; overflow: hidden; }
.model { width: 100%; height: 100%; }
.toggle { position: absolute; left: -1px; top: 385px; display: flex; align-items: center; justify-content: center; width: 33px; height: 34px; padding: 0; border: 1px solid #999; border-left: 0; background: #fff; }

.ink { stroke: #15191d; stroke-width: 4; }
.top { fill: #7aa2bd; }
.side { fill: #4b6272; }
.lit { fill: #7ca7c4; }
.plate { fill: #20292f; stroke: #111; stroke-width: 3; }
.edge { stroke: #1d262d; stroke-width: 3; }
.heavy { fill: none; stroke: #121517; stroke-width: 9; }
.band { stroke: #111a0e; stroke-width: 8; }
.line { fill: none; stroke: #1d262d; stroke-width: 3; }
.brace { fill: none; stroke: #1b242b; stroke-width: 13; }
.core { stroke: #5f7d92; stroke-width: 6; }
.cage { fill: none; stroke: #12171f; stroke-width: 7; }
.navy { fill: none; stroke: #14233a; stroke-width: 7; }
.rungs { fill: none; stroke: #28476a; stroke-width: 14; stroke-dasharray: 4 10; }
.gold { fill: none; stroke: #57420f; stroke-width: 6; }
.rail-line { fill: none; stroke: #35373a; stroke-width: 6; }
.rail-blue { fill: none; stroke: #34444f; stroke-width: 7; }
.rail-gray { fill: none; stroke: #343434; stroke-width: 7; }
.orange { fill: none; stroke: #7a480e; stroke-width: 7; }
.strut { fill: none; stroke: #2c2c2c; stroke-width: 9; }
</style>
